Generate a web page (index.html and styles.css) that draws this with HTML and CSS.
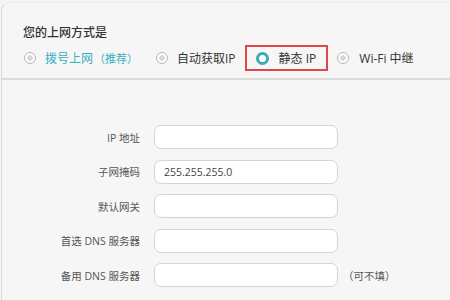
FILE: index.html
```html
<!DOCTYPE html>
<html lang="zh-CN">
<head>
    <meta charset="UTF-8">
    <title>上网设置</title>
    <link rel="stylesheet" href="styles.css">
</head>
<body>
    <div class="panel">
        <div class="mode">
            <div class="mode-title">您的上网方式是</div>
            <div class="mode-options">
                <label class="option option-pppoe"><span class="radio"></span>拨号上网<span class="hint">（推荐）</span></label>
                <label class="option option-dhcp"><span class="radio"></span>自动获取IP</label>
                <label class="option option-static"><span class="radio radio-on"></span>静态 IP</label>
                <label class="option option-relay"><span class="radio"></span>Wi-Fi 中继</label>
            </div>
        </div>
        <div class="form">
            <div class="field-label">IP 地址</div>
            <input class="field-input" type="text" value="">
            <div></div>

            <div class="field-label">子网掩码</div>
            <input class="field-input" type="text" value="255.255.255.0">
            <div></div>

            <div class="field-label">默认网关</div>
            <input class="field-input" type="text" value="">
            <div></div>

            <div class="field-label">首选 DNS 服务器</div>
            <input class="field-input" type="text" value="">
            <div></div>

            <div class="field-label">备用 DNS 服务器</div>
            <input class="field-input" type="text" value="">
            <div class="field-note">（可不填）</div>
        </div>
    </div>
</body>
</html>
```

FILE: styles.css
```css
* {
    margin: 0;
    padding: 0;
    box-sizing: border-box;
}

body {
    font-family: 'Open Sans', 'Noto Sans CJK SC', sans-serif;
    background-color: #f6f6f6;
    color: #333;
    height: 300px;
    overflow: hidden;
}

.panel {
    margin: 2px 0 0 1px;
    height: 298px;
    border-left: 1px solid #d9d9d9;
    border-top: 1px solid #ececec;
    border-top-left-radius: 8px;
}

.mode {
    height: 77px;
    padding: 22px 0 0 21px;
    border-bottom: 2px solid #dcdcdc;
}

.mode-title {
    font-size: 12px;
    line-height: 16px;
    font-weight: 500;
    color: #333;
}

.mode-options {
    display: flex;
    align-items: center;
    margin-top: 4px;
    margin-left: 1px;
    font-size: 12px;
}

.option {
    display: flex;
    align-items: center;
    height: 26px;
    white-space: nowrap;
}

.option-pppoe {
    color: #35b0c2;
    margin-right: 18px;
}

.option-pppoe .hint {
    font-size: 11px;
    margin-left: 1px;
}

.option-dhcp {
    margin-right: 9px;
}

.option-static {
    border: 2px solid #e0474a;
    padding: 0 10px 0 9px;
    margin-right: 9px;
}

.radio {
    width: 12px;
    height: 12px;
    border-radius: 50%;
    border: 1px solid #b5b5b5;
    background: radial-gradient(circle, #d6d6d6 0 2.5px, #fff 3px);
    margin-right: 9px;
    flex-shrink: 0;
}

.option-relay .radio {
    margin-right: 10px;
}

.radio-on {
    width: 13px;
    height: 13px;
    border: 3.5px solid #3aaab9;
    background: #fff;
    margin-right: 10px;
}

.form {
    display: grid;
    grid-template-columns: 138px 184px auto;
    column-gap: 14px;
    row-gap: 10.5px;
    padding-top: 45px;
    align-items: center;
}

.field-label {
    text-align: right;
    font-size: 10.5px;
    color: #555;
}

.field-input {
    height: 24px;
    border: 1px solid #d4d4d4;
    border-radius: 7px;
    background-color: #fff;
    font-family: 'Open Sans', 'Noto Sans CJK SC', sans-serif;
    font-size: 10.5px;
    color: #444;
    padding: 0 9px;
    outline: none;
}

.field-note {
    font-size: 10.5px;
    color: #555;
    margin-left: -9px;
}
```
